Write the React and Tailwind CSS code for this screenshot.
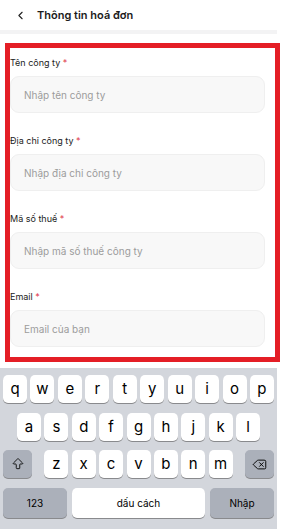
import { ChevronLeft, ArrowBigUp, Delete } from "lucide-react";

const fields = [
    { label: "Tên công ty", placeholder: "Nhập tên công ty" },
    { label: "Địa chỉ công ty", placeholder: "Nhập địa chỉ công ty" },
    { label: "Mã số thuế", placeholder: "Nhập mã số thuế công ty" },
    { label: "Email", placeholder: "Email của bạn" },
];

const row1 = ["q", "w", "e", "r", "t", "y", "u", "i", "o", "p"];
const row2 = ["a", "s", "d", "f", "g", "h", "j", "k", "l"];
const row3 = ["z", "x", "c", "v", "b", "n", "m"];

const Key = ({ children }) => (
    <div className="w-[24px] h-[28px] bg-white rounded-[5px] shadow-[0_1px_0_#898a8d] flex items-center justify-center text-[15px] text-black leading-none pb-[2px]">
        {children}
    </div>
);

const App = () => {
    return (
        <div className="w-[288px] h-[529px] bg-white overflow-hidden font-['Inter','Noto_Sans',sans-serif]">
            <div className="w-[277px] h-full flex flex-col">

                {/* Header */}
                <div className="h-[30px] flex items-center pl-[14px]">
                    <ChevronLeft className="w-[13px] h-[13px] text-[#222]" strokeWidth={2} />
                    <span className="ml-[10px] text-[11px] font-semibold text-[#1c1c1c]">
                        Thông tin hoá đơn
                    </span>
                </div>
                <div className="h-[4px] bg-[#f3f3f4]" />

                {/* Form */}
                <div className="mt-[9px] ml-[5px] w-[275px] h-[319px] border-[5px] border-[#e41e26] bg-white pt-[9px]">
                    <div className="flex flex-col gap-[22px]">
                        {fields.map((f) => (
                            <div key={f.label} className="flex flex-col">
                                <label className="h-[12px] leading-[12px] text-[9px] text-[#222]">
                                    {f.label} <span className="text-[#e0394a]">*</span>
                                </label>
                                <input
                                    type="text"
                                    placeholder={f.placeholder}
                                    className="mt-[7px] w-[255px] h-[37px] px-[13px] rounded-[9px] bg-[#f8f8f8] border border-[#efefef] text-[10px] placeholder:text-[#9c9c9c] focus:outline-none"
                                />
                            </div>
                        ))}
                    </div>
                </div>

                {/* Keyboard */}
                <div className="mt-[6px] flex-1 bg-[#d3d6dc] flex flex-col">
                    <div className="mt-[7px] px-[3px] flex justify-between">
                        {row1.map((k) => <Key key={k}>{k}</Key>)}
                    </div>
                    <div className="mt-[10px] px-[17px] flex justify-between">
                        {row2.map((k) => <Key key={k}>{k}</Key>)}
                    </div>
                    <div className="mt-[9px] px-[3px] flex justify-between items-center">
                        <div className="w-[29px] h-[28px] bg-[#abb0ba] rounded-[5px] shadow-[0_1px_0_#898a8d] flex items-center justify-center">
                            <ArrowBigUp className="w-[14px] h-[14px] text-black" strokeWidth={1.5} />
                        </div>
                        <div className="flex gap-[3.4px]">
                            {row3.map((k) => <Key key={k}>{k}</Key>)}
                        </div>
                        <div className="w-[29px] h-[28px] bg-[#abb0ba] rounded-[5px] shadow-[0_1px_0_#898a8d] flex items-center justify-center">
                            <Delete className="w-[15px] h-[15px] text-black" strokeWidth={1.5} />
                        </div>
                    </div>
                    <div className="mt-[10px] px-[3px] flex gap-[5px]">
                        <div className="w-[64px] h-[30px] bg-[#abb0ba] rounded-[5px] shadow-[0_1px_0_#898a8d] flex items-center justify-center text-[10px] text-black">
                            123
                        </div>
                        <div className="flex-1 h-[30px] bg-white rounded-[5px] shadow-[0_1px_0_#898a8d] flex items-center justify-center text-[10px] text-black">
                            dấu cách
                        </div>
                        <div className="w-[64px] h-[30px] bg-[#abb0ba] rounded-[5px] shadow-[0_1px_0_#898a8d] flex items-center justify-center text-[10px] text-black">
                            Nhập
                        </div>
                    </div>
                </div>

            </div>
        </div>
    );
};

export default App;
